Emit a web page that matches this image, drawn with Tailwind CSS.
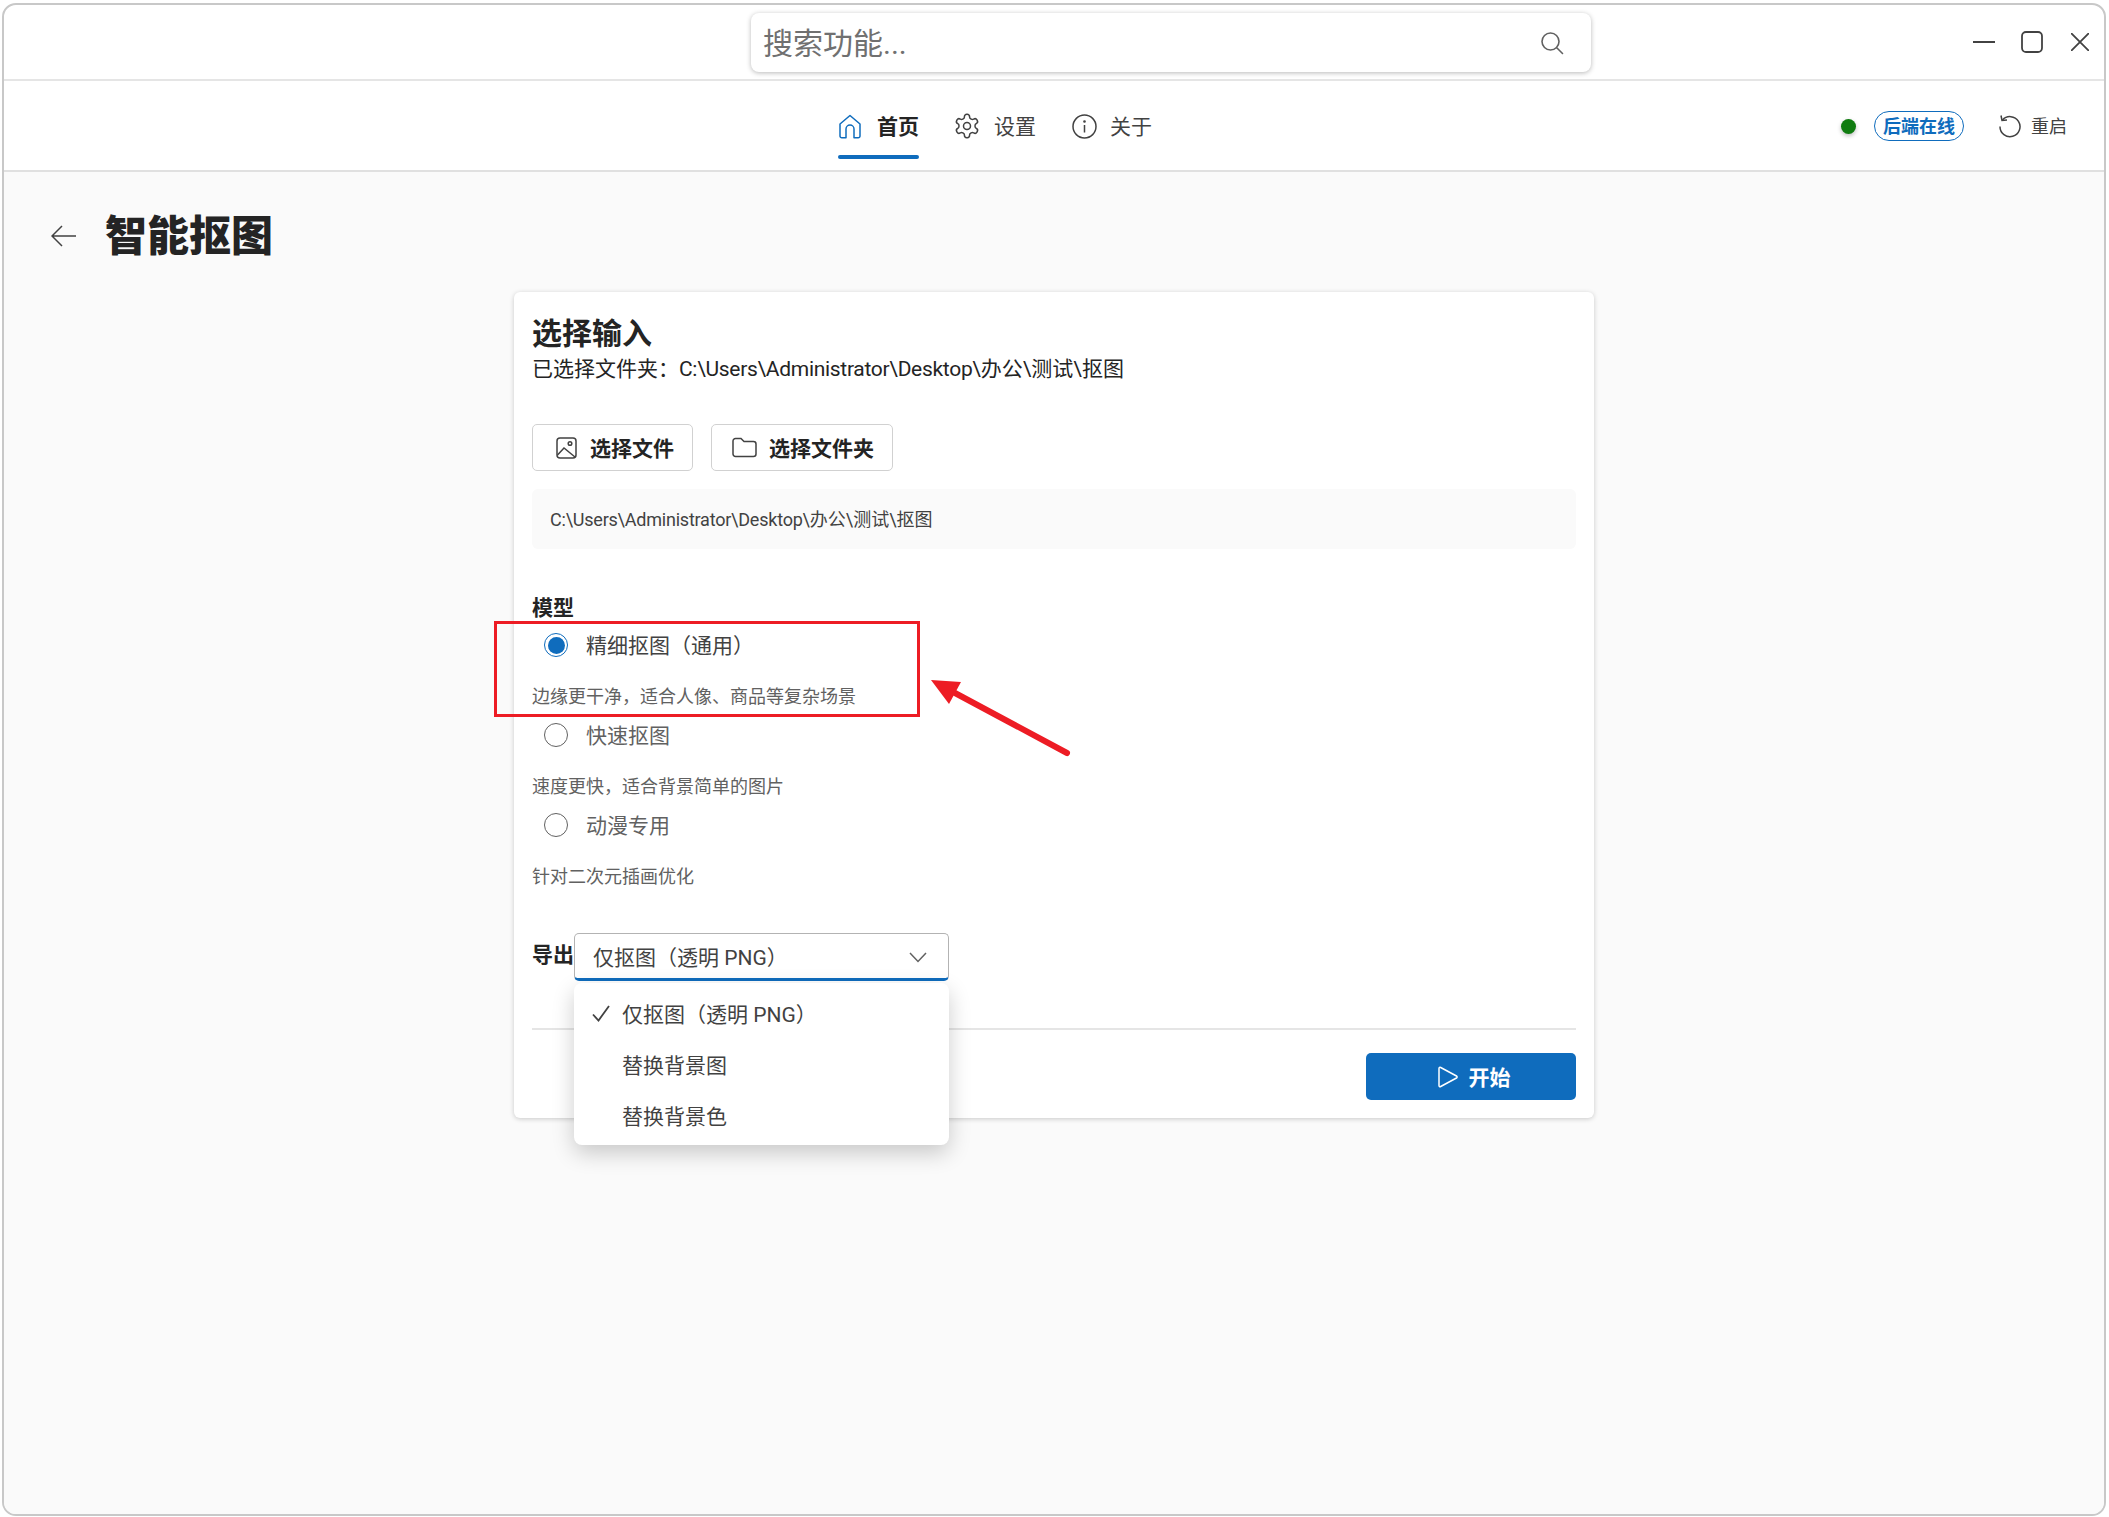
<!DOCTYPE html>
<html lang="zh-CN">
<head>
  <meta charset="UTF-8" />
  <title>智能抠图</title>
  <script src="https://cdn.jsdelivr.net/npm/@tailwindcss/browser@4"></script>
</head>
<body class="bg-white font-['Roboto','Noto_Sans_CJK_SC',sans-serif] text-[#242424]">

  <!-- Window -->
  <div class="ml-[2px] mt-[3px] flex h-[1513px] w-[2104px] flex-col overflow-hidden rounded-[14px] border-2 border-[#c8c8c8] bg-white">

    <!-- Title bar -->
    <div class="flex h-[76px] shrink-0 items-start border-b-2 border-[#e5e5e5] pl-[747px] pr-[15px]">
      <div class="mt-[8px] flex h-[59px] w-[840px] items-center justify-between rounded-[8px] bg-white pl-[12px] pr-[27px] shadow-[0_1px_5px_rgba(0,0,0,0.28)]">
        <span class="translate-y-[1px] text-[30px] text-[#707070]">搜索功能...</span>
        <svg width="24" height="24" viewBox="0 0 24 24" fill="none" stroke="#616161" stroke-width="1.6" stroke-linecap="round"><circle cx="10.5" cy="10.5" r="8.5"/><path d="m17 17 5.5 5.5"/></svg>
      </div>
      <div class="ml-auto mt-[26px] flex items-center">
        <svg width="22" height="22" viewBox="0 0 22 22" stroke="#424242" stroke-width="2"><path d="M0 11h22"/></svg>
        <svg class="ml-[26px]" width="22" height="22" viewBox="0 0 22 22" fill="none" stroke="#424242" stroke-width="1.8"><rect x="1" y="1" width="20" height="20" rx="4"/></svg>
        <svg class="ml-[28px]" width="18" height="18" viewBox="0 0 18 18" stroke="#424242" stroke-width="1.8"><path d="m0 0 18 18M18 0 0 18"/></svg>
      </div>
    </div>

    <!-- Nav -->
    <div class="flex h-[91px] shrink-0 border-b-2 border-[#e0e0e0] pl-[834px] pr-[37px]">
      <div class="pt-[32px]">
        <div class="flex h-[26px] items-center gap-[15px] text-[21px] font-bold">
          <svg width="24" height="25" viewBox="0 0 24 25" fill="none" stroke="#0f6cbd" stroke-width="1.5" stroke-linejoin="round"><path d="M2 10 12 1.500 22 10v12a1.800 1.800 0 0 1-1.800 1.800H16V15a4 4 0 0 0-8 0v8.800H3.800A1.800 1.800 0 0 1 2 22z"/></svg>
          <span class="translate-y-[2px]">首页</span>
        </div>
        <div class="mt-[16px] h-[4px] rounded-full bg-[#0f6cbd]"></div>
      </div>
      <div class="ml-[34px] flex h-[26px] translate-y-[32px] items-center gap-[13px] text-[21px] text-[#424242]">
        <svg width="28" height="28" viewBox="0 0 24 24" fill="none" stroke="#424242" stroke-width="1.300"><path d="M12.220 2h-.44a2 2 0 0 0-2 2v.18a2 2 0 0 1-1 1.730l-.43.25a2 2 0 0 1-2 0l-.15-.08a2 2 0 0 0-2.730.73l-.22.38a2 2 0 0 0 .73 2.730l.15.1a2 2 0 0 1 1 1.720v.51a2 2 0 0 1-1 1.740l-.15.09a2 2 0 0 0-.73 2.730l.22.38a2 2 0 0 0 2.730.73l.15-.08a2 2 0 0 1 2 0l.43.25a2 2 0 0 1 1 1.730V20a2 2 0 0 0 2 2h.44a2 2 0 0 0 2-2v-.18a2 2 0 0 1 1-1.730l.43-.25a2 2 0 0 1 2 0l.15.08a2 2 0 0 0 2.730-.73l.22-.39a2 2 0 0 0-.73-2.730l-.15-.08a2 2 0 0 1-1-1.740v-.5a2 2 0 0 1 1-1.740l.15-.09a2 2 0 0 0 .73-2.730l-.22-.38a2 2 0 0 0-2.730-.73l-.15.08a2 2 0 0 1-2 0l-.43-.25a2 2 0 0 1-1-1.730V4a2 2 0 0 0-2-2z"/><circle cx="12" cy="12" r="3"/></svg>
        <span class="translate-y-[2px]">设置</span>
      </div>
      <div class="ml-[36px] flex h-[26px] translate-y-[32px] items-center gap-[13px] text-[21px] text-[#424242]">
        <svg width="25" height="25" viewBox="0 0 25 25" fill="none" stroke="#424242" stroke-width="1.500"><circle cx="12.500" cy="12.500" r="11.500"/><path d="M12.500 11v7.500"/><circle cx="12.500" cy="7.500" r="0.6" fill="#424242"/></svg>
        <span class="translate-y-[2px]">关于</span>
      </div>

      <div class="ml-auto flex h-[26px] translate-y-[32px] items-center">
        <div class="h-[15px] w-[15px] rounded-full bg-[#107c10] shadow-[0_2px_4px_rgba(0,0,0,0.25)]"></div>
        <div class="ml-[18px] flex h-[30px] w-[90px] items-center justify-center rounded-full border border-[#0f6cbd] text-[18px] font-bold text-[#0f6cbd]">后端在线</div>
        <svg class="ml-[35px]" width="22" height="23" viewBox="0 0 22 23" fill="none" stroke="#424242" stroke-width="1.500"><path d="M3.500 5a10 10 0 1 1-2.500 6.500"/><path d="M2 .5l1 5 5-.5"/></svg>
        <span class="ml-[10px] text-[18px] text-[#424242]">重启</span>
      </div>
    </div>

    <!-- Page -->
    <div class="flex-1 bg-[#fafafa]">
      <div class="flex h-[120px] items-start pl-[47px] pt-[37px]">
        <svg class="mt-[16px]" width="25" height="22" viewBox="0 0 25 22" fill="none" stroke="#424242" stroke-width="1.500"><path d="M25 11H1M11 1 1 11l10 10"/></svg>
        <h1 class="ml-[29px] text-[42px] leading-[56px] font-black">智能抠图</h1>
      </div>

      <!-- Card -->
      <div class="relative ml-[510px] w-[1080px] rounded-[6px] bg-white pb-[18px] pl-[18px] pr-[18px] pt-[21px] shadow-[0_1px_5px_rgba(0,0,0,0.2)]">
        <h2 class="h-[41px] text-[30px] leading-[42px] font-bold">选择输入</h2>
        <p class="h-[30px] text-[21px] leading-[30px]">已选择文件夹：<span class="tracking-[-0.3px]">C:\Users\Administrator\Desktop\</span>办公\测试\抠图</p>

        <div class="mt-[40px] flex gap-[18px]">
          <button class="flex h-[47px] w-[161px] items-center gap-[12px] rounded-[5px] border border-[#d1d1d1] pl-[23px] text-[21px] font-bold">
            <svg width="21" height="22" viewBox="0 0 21 22" fill="none" stroke="#424242" stroke-width="1.500"><rect x="1" y="1" width="19" height="20" rx="3"/><circle cx="14" cy="6.500" r="1.800"/><path d="m1.500 18 6.500-7 11 9"/></svg>
            <span class="translate-x-[1px] translate-y-[2px]">选择文件</span>
          </button>
          <button class="flex h-[47px] w-[182px] items-center gap-[11px] rounded-[5px] border border-[#d1d1d1] pl-[20px] text-[21px] font-bold">
            <svg width="25" height="21" viewBox="0 0 25 21" fill="none" stroke="#424242" stroke-width="1.500"><path d="M1 4a2.500 2.500 0 0 1 2.500-2.500h5.500l3 3h9.500A2.500 2.500 0 0 1 24 7v10a2.500 2.500 0 0 1-2.500 2.500h-18A2.500 2.500 0 0 1 1 17z"/></svg>
            <span class="translate-x-[1px] translate-y-[2px]">选择文件夹</span>
          </button>
        </div>

        <div class="mt-[18px] flex h-[60px] items-center rounded-[6px] bg-[#fafafa] pl-[18px] text-[18px] text-[#424242]"><span class="tracking-[-0.22px]">C:\Users\Administrator\Desktop\</span>办公\测试\抠图</div>

        <div class="mt-[44px] h-[30px] text-[21px] leading-[30px] font-bold">模型</div>

        <div class="h-[90px]">
          <div class="flex h-[44px] items-center gap-[18px] pl-[12px] text-[21px] text-[#424242]">
            <div class="flex h-[24px] w-[24px] items-center justify-center rounded-full border border-[#0f6cbd]"><div class="h-[17px] w-[17px] rounded-full bg-[#0f6cbd]"></div></div>
            <span class="translate-y-[2px]">精细抠图（通用）</span>
          </div>
          <div class="mt-[14px] h-[30px] text-[18px] leading-[32px] text-[#616161]">边缘更干净，适合人像、商品等复杂场景</div>
        </div>
        <div class="h-[90px]">
          <div class="flex h-[44px] items-center gap-[18px] pl-[12px] text-[21px] text-[#616161]">
            <div class="h-[24px] w-[24px] rounded-full border border-[#616161]"></div>
            <span class="translate-y-[2px]">快速抠图</span>
          </div>
          <div class="mt-[14px] h-[30px] text-[18px] leading-[32px] text-[#616161]">速度更快，适合背景简单的图片</div>
        </div>
        <div class="h-[90px]">
          <div class="flex h-[44px] items-center gap-[18px] pl-[12px] text-[21px] text-[#616161]">
            <div class="h-[24px] w-[24px] rounded-full border border-[#616161]"></div>
            <span class="translate-y-[2px]">动漫专用</span>
          </div>
          <div class="mt-[14px] h-[30px] text-[18px] leading-[32px] text-[#616161]">针对二次元插画优化</div>
        </div>

        <div class="mt-[40px] flex items-start">
          <span class="w-[42px] pt-[7px] text-[21px] leading-[30px] font-bold">导出</span>
          <div class="relative w-[375px]">
            <div class="flex h-[48px] items-center justify-between rounded-[5px] border border-[#b3b3b3] border-b-[3px] border-b-[#0f6cbd] pl-[18px] pr-[21px] text-[21px] text-[#424242]">
              <span class="translate-y-[3px]">仅抠图（透明 PNG）</span>
              <svg class="translate-y-[1px]" width="18" height="11" viewBox="0 0 18 11" fill="none" stroke="#616161" stroke-width="1.500"><path d="m1 1 8 8.500L17 1"/></svg>
            </div>
            <!-- Dropdown -->
            <div class="absolute left-0 top-[50px] z-10 h-[162px] w-[375px] rounded-[8px] bg-white pt-[6px] text-[21px] text-[#424242] shadow-[0_8px_22px_rgba(0,0,0,0.2)]">
              <div class="flex h-[51px] items-center pl-[18px]">
                <svg class="mr-[12px] -translate-y-[1px]" width="18" height="17" viewBox="0 0 18 17" fill="none" stroke="#424242" stroke-width="1.800"><path d="m1 9.500 5.500 6L17 1"/></svg>
                <span class="translate-y-[1px]">仅抠图（透明 PNG）</span>
              </div>
              <div class="flex h-[51px] translate-y-[1px] items-center pl-[48px]">替换背景图</div>
              <div class="flex h-[51px] translate-y-[1px] items-center pl-[48px]">替换背景色</div>
            </div>
          </div>
        </div>

        <div class="mt-[47px] h-[2px] bg-[#e5e5e5]"></div>

        <div class="mt-[23px] flex justify-end">
          <button class="flex h-[47px] w-[210px] items-center justify-center gap-[11px] rounded-[5px] bg-[#0f6cbd] pl-[6px] text-[21px] font-bold text-white">
            <svg width="20" height="22" viewBox="0 0 20 22" fill="none" stroke="white" stroke-width="1.500" stroke-linejoin="round"><path d="M1 2.500c0-1 .8-1.500 1.700-1L18.500 10c.8.500.8 1.500 0 2L2.700 20.500c-.9.500-1.700 0-1.700-1z"/></svg>
            <span class="translate-y-[2px]">开始</span>
          </button>
        </div>

        <!-- Red annotation -->
        <div class="absolute left-[-20px] top-[329px] h-[96px] w-[426px] border-[3px] border-[#ed1c24]"></div>
        <svg class="absolute left-[411px] top-[382px]" width="150" height="85" viewBox="0 0 150 85" fill="none">
          <path d="M30 19 142 79" stroke="#ed1c24" stroke-width="6" stroke-linecap="round"/>
          <path d="M6 6 36 8 24 30z" fill="#ed1c24"/>
        </svg>
      </div>
    </div>
  </div>

</body>
</html>
